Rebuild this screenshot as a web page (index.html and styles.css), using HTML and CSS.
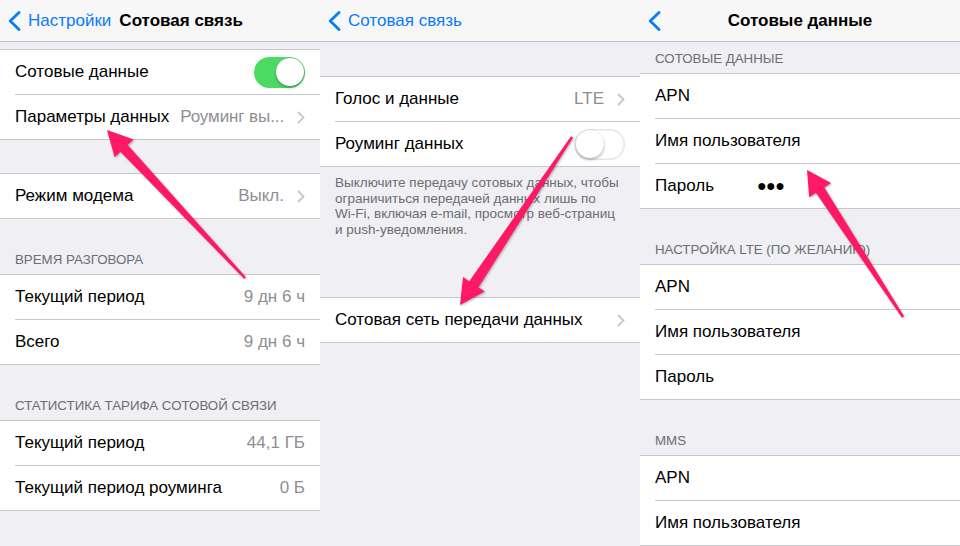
FILE: index.html
```html
<!DOCTYPE html>
<html>
    <head>
        <meta charset="utf-8">
        <link rel="stylesheet" href="styles.css">
    </head>
    <body>
        <div class="page">
            <!-- screen 1 -->
            <div class="screen">
                <div class="nav">
                    <span class="back">
                        <svg class="back-icon" viewBox="0 0 13 20"><path d="M11 1.5 L2.2 10 L11 18.5"/></svg>
                        Настройки
                    </span>
                    <span class="title">Сотовая связь</span>
                </div>
                <div class="group gap-7">
                    <div class="row">
                        <span class="label">Сотовые данные</span>
                        <span class="switch on"><span class="knob"></span></span>
                    </div>
                    <div class="row">
                        <span class="label">Параметры данных</span>
                        <span class="detail tight">Роуминг вы...</span>
                        <svg class="chevron" viewBox="0 0 8 13"><path d="M1 1 L6.5 6.5 L1 12"/></svg>
                    </div>
                </div>
                <div class="group gap-33">
                    <div class="row">
                        <span class="label">Режим модема</span>
                        <span class="detail">Выкл.</span>
                        <svg class="chevron" viewBox="0 0 8 13"><path d="M1 1 L6.5 6.5 L1 12"/></svg>
                    </div>
                </div>
                <div class="header">ВРЕМЯ РАЗГОВОРА</div>
                <div class="group">
                    <div class="row">
                        <span class="label">Текущий период</span>
                        <span class="detail">9 дн 6 ч</span>
                    </div>
                    <div class="row">
                        <span class="label">Всего</span>
                        <span class="detail">9 дн 6 ч</span>
                    </div>
                </div>
                <div class="header">СТАТИСТИКА ТАРИФА СОТОВОЙ СВЯЗИ</div>
                <div class="group">
                    <div class="row">
                        <span class="label">Текущий период</span>
                        <span class="detail">44,1 ГБ</span>
                    </div>
                    <div class="row">
                        <span class="label">Текущий период роуминга</span>
                        <span class="detail">0 Б</span>
                    </div>
                </div>
            </div>

            <!-- screen 2 -->
            <div class="screen">
                <div class="nav">
                    <span class="back">
                        <svg class="back-icon" viewBox="0 0 13 20"><path d="M11 1.5 L2.2 10 L11 18.5"/></svg>
                        Сотовая связь
                    </span>
                </div>
                <div class="group gap-34">
                    <div class="row">
                        <span class="label">Голос и данные</span>
                        <span class="detail">LTE</span>
                        <svg class="chevron" viewBox="0 0 8 13"><path d="M1 1 L6.5 6.5 L1 12"/></svg>
                    </div>
                    <div class="row">
                        <span class="label">Роуминг данных</span>
                        <span class="switch"><span class="knob"></span></span>
                    </div>
                </div>
                <div class="footer">
                    Выключите передачу сотовых данных, чтобы<br>
                    ограничиться передачей данных лишь по<br>
                    Wi-Fi, включая e-mail, просмотр веб-страниц<br>
                    и push-уведомления.
                </div>
                <div class="group gap-60">
                    <div class="row">
                        <span class="label">Сотовая сеть передачи данных</span>
                        <svg class="chevron push" viewBox="0 0 8 13"><path d="M1 1 L6.5 6.5 L1 12"/></svg>
                    </div>
                </div>
            </div>

            <!-- screen 3 -->
            <div class="screen">
                <div class="nav centered">
                    <span class="back">
                        <svg class="back-icon" viewBox="0 0 13 20"><path d="M11 1.5 L2.2 10 L11 18.5"/></svg>
                    </span>
                    <span class="title">Сотовые данные</span>
                </div>
                <div class="header short">СОТОВЫЕ ДАННЫЕ</div>
                <div class="group">
                    <div class="row field"><span class="label">APN</span></div>
                    <div class="row field"><span class="label">Имя пользователя</span></div>
                    <div class="row field">
                        <span class="label">Пароль</span>
                        <span class="secret">●●●</span>
                    </div>
                </div>
                <div class="header">НАСТРОЙКА LTE (ПО ЖЕЛАНИЮ)</div>
                <div class="group">
                    <div class="row field"><span class="label">APN</span></div>
                    <div class="row field"><span class="label">Имя пользователя</span></div>
                    <div class="row field"><span class="label">Пароль</span></div>
                </div>
                <div class="header">MMS</div>
                <div class="group">
                    <div class="row field"><span class="label">APN</span></div>
                    <div class="row field"><span class="label">Имя пользователя</span></div>
                </div>
            </div>

            <!-- annotation arrows drawn over the screens -->
            <svg class="arrows" viewBox="0 0 960 546" width="960" height="546">
                <polygon points="107,130 133.6,139.4 127.7,144.9 245.9,277.2 244.1,278.8 120.4,151.7 114.6,157.2"/>
                <polygon points="460,305 484.7,291.4 478.5,287.3 573,137.7 571,136.3 469.3,281.2 463,277"/>
                <polygon points="807,170 831,183 824.3,187.4 904,316.3 902,317.7 815.9,192.8 809.2,197.2"/>
            </svg>
        </div>
    </body>
</html>
```

FILE: styles.css
```css
* {
    box-sizing: border-box;
}
body {
    margin: 0;
    background: #efeff4;
    font-family: "Liberation Sans", Arial, sans-serif;
}
.page {
    position: relative;
    display: flex;
    width: 960px;
    height: 546px;
    overflow: hidden;
}
.screen {
    flex: none;
    width: 320px;
    height: 546px;
    overflow: hidden;
    background: #efeff4;
}

/* navigation bar */
.nav {
    display: flex;
    align-items: center;
    height: 42px;
    padding: 0 8px;
    background: #f7f7f8;
    border-bottom: 1px solid #c2c2c6;
    font-size: 17px;
    color: #000;
}
.nav.centered {
    display: grid;
    grid-template-columns: 1fr auto 1fr;
}
.nav .back {
    display: flex;
    align-items: center;
    gap: 7px;
    color: #0a7aff;
}
.nav .back-icon {
    width: 13px;
    height: 20px;
    fill: none;
    stroke: #0a7aff;
    stroke-width: 2.8;
    stroke-linecap: round;
    stroke-linejoin: round;
}
.nav .title {
    margin-left: 8px;
    font-weight: bold;
}
.nav.centered .title {
    margin-left: 0;
}

/* grouped table */
.group {
    background: #fff;
    border-top: 1px solid #c8c7cc;
    border-bottom: 1px solid #c8c7cc;
}
.gap-7 {
    margin-top: 7px;
}
.gap-33 {
    margin-top: 33px;
}
.gap-34 {
    margin-top: 34px;
}
.gap-60 {
    margin-top: 60px;
}
.row {
    display: flex;
    align-items: center;
    height: 44px;
    margin-left: 15px;
    padding-right: 15px;
    font-size: 17px;
    color: #000;
    white-space: nowrap;
}
.row + .row {
    height: 45px;
    border-top: 1px solid #c8c7cc;
}
.row .label {
    flex: none;
}
.row.field .label {
    width: 102px;
}
.row .detail {
    margin-left: auto;
    padding-left: 10px;
    color: #8e8e93;
}
.row .detail.tight {
    padding-left: 8px;
    letter-spacing: -0.1px;
}
.row .secret {
    font-size: 16px;
    letter-spacing: -0.6px;
    color: #000;
}
.chevron {
    flex: none;
    width: 8px;
    height: 13px;
    margin-left: 13px;
    fill: none;
    stroke: #c7c7cc;
    stroke-width: 1.8;
}
.chevron.push {
    margin-left: auto;
}

/* switches */
.switch {
    flex: none;
    display: flex;
    align-items: center;
    justify-content: flex-start;
    width: 51px;
    height: 31px;
    margin-left: auto;
    padding: 1.5px;
    border-radius: 16px;
    background: #fff;
    box-shadow: inset 0 0 0 1.5px #e5e5ea;
}
.switch.on {
    justify-content: flex-end;
    background: #4cd964;
    box-shadow: none;
}
.switch .knob {
    width: 28px;
    height: 28px;
    border-radius: 50%;
    background: #fff;
    box-shadow: 0 2px 3px rgba(0, 0, 0, 0.25), 0 0 0 0.5px rgba(0, 0, 0, 0.08);
}

/* section headers and footers */
.header {
    display: flex;
    align-items: flex-end;
    height: 55px;
    padding: 0 15px 6px;
    font-size: 13.3px;
    line-height: 16px;
    color: #6d6d72;
    white-space: nowrap;
}
.header.short {
    height: 31px;
}
.footer {
    padding: 8px 15px 0;
    font-size: 13.5px;
    line-height: 15.5px;
    color: #6d6d72;
    white-space: nowrap;
}

/* annotation arrows */
.arrows {
    position: absolute;
    top: 0;
    left: 0;
    pointer-events: none;
    filter: drop-shadow(1px 1px 1px rgba(0, 0, 0, 0.3));
}
.arrows polygon {
    fill: #ff1864;
}
```
